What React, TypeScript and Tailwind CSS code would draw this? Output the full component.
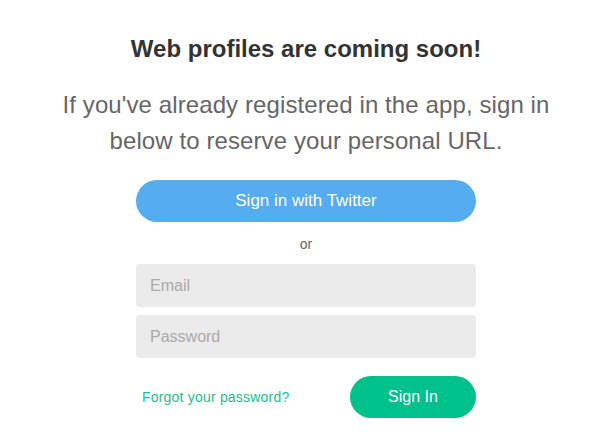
import React from "react";

export default function App() {
  return (
    <div
      className="w-[610px] h-[443px] overflow-hidden bg-white flex flex-col items-center pt-[35px] pl-[2px]"
      style={{ fontFamily: '"Liberation Sans", Arial, sans-serif' }}
    >
      <h1 className="text-[24px] leading-[28px] font-bold text-[#333333] text-center whitespace-nowrap">
        Web profiles are coming soon!
      </h1>
      <p className="mt-[24px] w-[520px] text-center text-[24px] leading-[36px] text-[#666666] tracking-[0.1px]">
        If you've already registered in the app, sign in below to reserve your personal URL.
      </p>
      <div className="w-[340px] mt-[21px] flex flex-col">
        <button className="h-[42px] w-full rounded-full bg-[#55acee] text-white text-[17px]">
          Sign in with Twitter
        </button>
        <div className="mt-[12px] text-center text-[14px] leading-[20px] text-[#666666]">or</div>
        <input
          className="mt-[10px] h-[43px] w-full rounded-[4px] bg-[#ebebeb] px-[14px] text-[16px] text-[#333] placeholder:text-[#a9a9a9] outline-none"
          placeholder="Email"
        />
        <input
          type="password"
          className="mt-[8px] h-[43px] w-full rounded-[4px] bg-[#ebebeb] px-[14px] text-[16px] text-[#333] placeholder:text-[#a9a9a9] outline-none"
          placeholder="Password"
        />
        <div className="mt-[18px] flex items-center justify-between">
          <a href="#" className="ml-[6px] text-[14px] text-[#1cbf8e] tracking-[0.2px]">
            Forgot your password?
          </a>
          <button className="h-[42px] w-[126px] rounded-full bg-[#00c08b] text-white text-[16px]">
            Sign In
          </button>
        </div>
      </div>
    </div>
  );
}
